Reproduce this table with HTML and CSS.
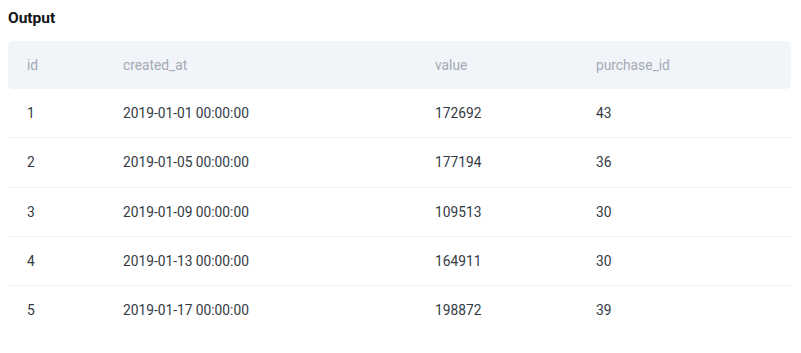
FILE: index.html
```html
<!DOCTYPE html>
<html>
<head>
<meta charset="utf-8">
<link rel="stylesheet" href="styles.css">
</head>
<body>
<div class="panel">
  <div class="title">Output</div>
  <div class="table">
    <div class="row head">
      <div class="cell">id</div>
      <div class="cell">created_at</div>
      <div class="cell">value</div>
      <div class="cell">purchase_id</div>
    </div>
    <div class="row">
      <div class="cell">1</div>
      <div class="cell">2019-01-01 00:00:00</div>
      <div class="cell">172692</div>
      <div class="cell">43</div>
    </div>
    <div class="row">
      <div class="cell">2</div>
      <div class="cell">2019-01-05 00:00:00</div>
      <div class="cell">177194</div>
      <div class="cell">36</div>
    </div>
    <div class="row">
      <div class="cell">3</div>
      <div class="cell">2019-01-09 00:00:00</div>
      <div class="cell">109513</div>
      <div class="cell">30</div>
    </div>
    <div class="row">
      <div class="cell">4</div>
      <div class="cell">2019-01-13 00:00:00</div>
      <div class="cell">164911</div>
      <div class="cell">30</div>
    </div>
    <div class="row last">
      <div class="cell">5</div>
      <div class="cell">2019-01-17 00:00:00</div>
      <div class="cell">198872</div>
      <div class="cell">39</div>
    </div>
  </div>
</div>
</body>
</html>
```

FILE: styles.css
```css
html, body {
  margin: 0;
  padding: 0;
  background: #ffffff;
}
body {
  font-family: Roboto, "Liberation Sans", sans-serif;
  color: #333a44;
}
.panel {
  padding: 8px 10px 0 8px;
}
.title {
  font-size: 15.5px;
  font-weight: 700;
  line-height: 20px;
  color: #111418;
  margin-bottom: 13px;
}
.table {
  width: 783px;
}
.row {
  display: grid;
  grid-template-columns: 96px 312px 161px 1fr;
  height: 48.33px;
  align-items: center;
  border-bottom: 1px solid #edf0f4;
  font-size: 13.75px;
}
.row.head {
  height: 48px;
  background: #f1f4f8;
  border-radius: 5px;
  border-bottom: none;
  color: #a3abb7;
}
.row.last {
  border-bottom-color: transparent;
}
.cell {
  padding-left: 19px;
  white-space: nowrap;
}
```
